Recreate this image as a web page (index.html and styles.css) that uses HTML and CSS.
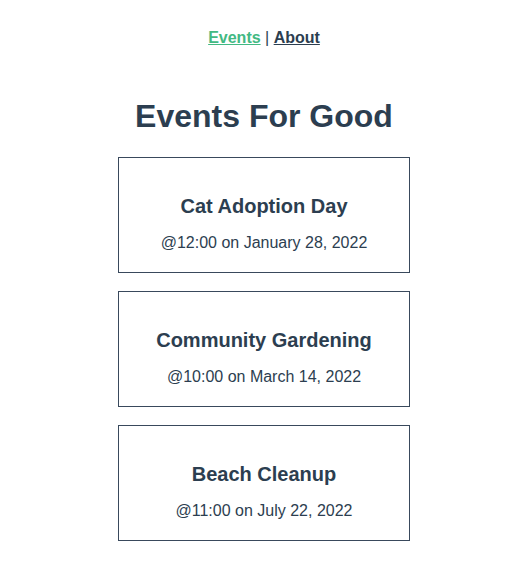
FILE: index.html
```html
<!DOCTYPE html>
<html lang="en">
<head>
<meta charset="utf-8">
<title>Events For Good</title>
<link rel="stylesheet" href="styles.css">
</head>
<body>
<div class="app">
  <nav class="nav">
    <a href="#" class="nav-link active">Events</a> |
    <a href="#" class="nav-link">About</a>
  </nav>
  <h1 class="page-title">Events For Good</h1>
  <div class="events">
    <div class="event-card">
      <h4 class="event-title">Cat Adoption Day</h4>
      <span class="event-date">@12:00 on January 28, 2022</span>
    </div>
    <div class="event-card">
      <h4 class="event-title">Community Gardening</h4>
      <span class="event-date">@10:00 on March 14, 2022</span>
    </div>
    <div class="event-card">
      <h4 class="event-title">Beach Cleanup</h4>
      <span class="event-date">@11:00 on July 22, 2022</span>
    </div>
  </div>
</div>
</body>
</html>
```
FILE: styles.css
```css
html, body {
  margin: 0;
  padding: 0;
  background: #ffffff;
}
.app {
  font-family: "Liberation Sans", Arial, Helvetica, sans-serif;
  text-align: center;
  color: #2c3e50;
  padding-right: 2px;
  -webkit-font-smoothing: antialiased;
}
.nav {
  padding: 29px 30px 30px;
  font-size: 16px;
  line-height: 18px;
}
.nav-link {
  font-weight: bold;
  color: #2c3e50;
}
.nav-link.active {
  color: #42b983;
}
.page-title {
  font-size: 32px;
  line-height: 37px;
  margin: 21px 0 22px;
  font-weight: bold;
}
.events {
  display: flex;
  flex-direction: column;
  align-items: center;
}
.event-card {
  width: 250px;
  padding: 20px;
  border: 1px solid #39495c;
  margin-bottom: 18px;
  cursor: pointer;
}
.event-title {
  font-size: 20px;
  line-height: 23px;
  margin: 17px 0 15px;
  font-weight: bold;
}
.event-date {
  display: block;
  font-size: 16px;
  line-height: 19px;
}
```
